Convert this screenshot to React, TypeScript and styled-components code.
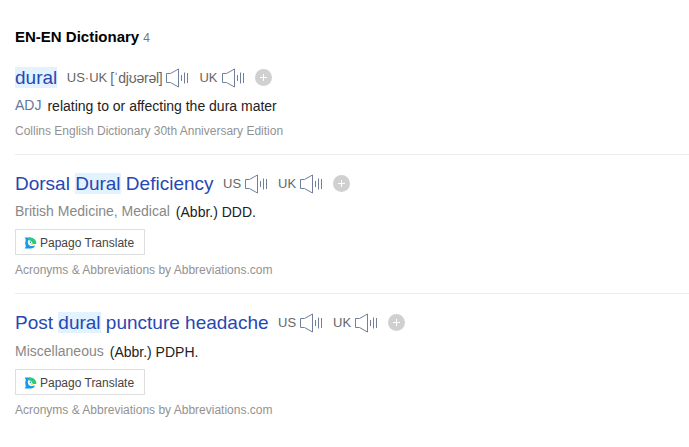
import React from "react";
import styled, { createGlobalStyle } from "styled-components";

const Global = createGlobalStyle`
  body { margin: 0; background: #fff; overflow: hidden; font-family: "Liberation Sans", Arial, sans-serif; }
  * { box-sizing: border-box; }
`;
const Section = styled.section`
  padding: 27px 0 0 15px;
`;
const Heading = styled.h3`
  margin: 0;
  height: 20px;
  font-size: 15px;
  line-height: 20px;
  color: #000;
`;
const Count = styled.span`
  margin-left: 4px;
  font-size: 12px;
  font-weight: 400;
  color: #777;
`;
const Entry = styled.article<{ $h: number }>`
  height: ${(p) => p.$h}px;
  padding-top: 18px;
  white-space: nowrap;
  & + & { padding-top: 16px; border-top: 1px solid #ececec; }
`;
const TitleRow = styled.div`
  display: flex;
  align-items: center;
  height: 25px;
`;
const Word = styled.a`
  font-size: 19px;
  line-height: 22px;
  color: #2747b3;
  margin-right: 9.5px;
`;
const Mark = styled.mark`
  display: inline-block;
  height: 21px;
  line-height: 22px;
  color: inherit;
  background: #e2f2ff;
`;
const Pron = styled.span`
  display: flex;
  align-items: center;
  margin-right: 10px;
  font-size: 13px;
  line-height: 20px;
  color: #666;
  svg { margin: 1px 0 0 3px; }
`;
const Phonetic = styled.span`
  margin-left: 3px;
  font-size: 14px;
  letter-spacing: -0.24px;
`;
const Add = styled.button`
  display: flex;
  padding: 0;
  border: 0;
  background: none;
`;
const Meaning = styled.p<{ $gap?: number }>`
  display: flex;
  margin: ${(p) => p.$gap ?? 6}px 0 0;
  font-size: 14px;
  line-height: 20px;
  color: #222;
`;
const Label = styled.span<{ $pos?: boolean }>`
  margin: -1px 6px 0 0;
  color: ${(p) => (p.$pos ? "#61799c" : "#888")};
`;
const Translate = styled.button`
  display: flex;
  align-items: center;
  width: 130px;
  height: 26px;
  margin-top: 7px;
  padding: 2px 0 0 8px;
  border: 1px solid #dedede;
  background: #fff;
  font: 12px "Liberation Sans", Arial, sans-serif;
  color: #444;
  svg { margin: -1px 3px 0 0; }
`;
const Source = styled.div`
  margin-top: 7px;
  font-size: 12px;
  line-height: 16px;
  color: #929292;
`;

const Speaker = () => (
  <svg width="24" height="20" viewBox="0 0 24 20" fill="none" stroke="#71809a">
    <path d="M1.5 5.5H5.5L13.5 1V19L5.5 14.5H1.5Z" />
    <path d="M16.5 7V13M19.5 4.5V15.5M22.5 5V15" />
  </svg>
);
const Plus = () => (
  <svg width="17" height="17" viewBox="0 0 17 17">
    <circle cx="8.5" cy="8.5" r="8.5" fill="#d0d0d0" />
    <path d="M8.5 5V12M5 8.5H12" stroke="#fff" />
  </svg>
);
const Papago = () => (
  <svg width="13" height="12" viewBox="0 0 13 12">
    <path d="M.7 .5H7L4.2 3.2Q3 6.3 5.2 8.2Q7.2 9.7 11 8.6Q10.2 11.6 6.6 11.6H.7L1.8 9.5Q.5 6 1.8 2.7Z" fill="#159be8" />
    <path d="M5 .5H6.5A5.8 5.8 0 0 1 12.3 7H8.7Q8 3.3 4.2 3.2Z" fill="#28cb78" />
    <circle cx="6.4" cy="5.3" r=".7" fill="#247aa0" />
    <path d="M6.8 6.1L9.8 7.4L6.8 8.1Z" fill="#ffcf27" />
  </svg>
);

interface Pronunciation { region: string; ipa?: string }
const Title = ({ children, prons }: { children: React.ReactNode; prons: Pronunciation[] }) => (
  <TitleRow>
    <Word>{children}</Word>
    {prons.map((p) => (
      <Pron key={p.region}>
        {p.region}
        {p.ipa && <Phonetic>{p.ipa}</Phonetic>}
        <Speaker />
      </Pron>
    ))}
    <Add aria-label="Add"><Plus /></Add>
  </TitleRow>
);
const regions = [{ region: "US" }, { region: "UK" }];

export default function App() {
  return (
    <>
      <Global />
      <Section>
        <Heading>EN-EN Dictionary<Count>4</Count></Heading>
        <Entry $h={107}>
          <Title prons={[{ region: "US·UK", ipa: "[ˈdjʊərəl]" }, { region: "UK" }]}><Mark>dural</Mark></Title>
          <Meaning><Label $pos>ADJ</Label>relating to or affecting the dura mater</Meaning>
          <Source>Collins English Dictionary 30th Anniversary Edition</Source>
        </Entry>
        <Entry $h={139}>
          <Title prons={regions}>Dorsal <Mark>Dural</Mark> Deficiency</Title>
          <Meaning><Label>British Medicine, Medical</Label>(Abbr.) DDD.</Meaning>
          <Translate><Papago />Papago Translate</Translate>
          <Source>Acronyms &amp; Abbreviations by Abbreviations.com</Source>
        </Entry>
        <Entry $h={139}>
          <Title prons={regions}>Post <Mark>dural</Mark> puncture headache</Title>
          <Meaning $gap={7}><Label>Miscellaneous</Label>(Abbr.) PDPH.</Meaning>
          <Translate><Papago />Papago Translate</Translate>
          <Source>Acronyms &amp; Abbreviations by Abbreviations.com</Source>
        </Entry>
      </Section>
    </>
  );
}
